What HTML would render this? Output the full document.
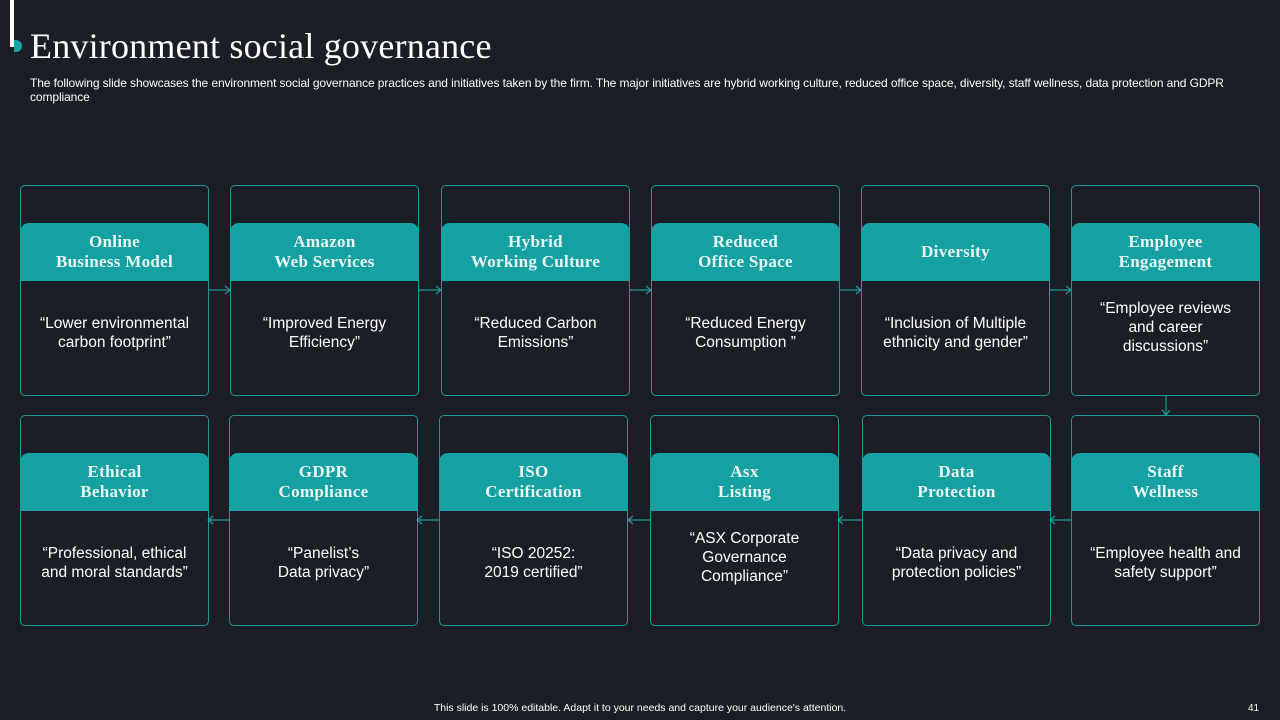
<!DOCTYPE html>
<html><head><meta charset="utf-8"><style>
body{margin:0;width:1280px;height:720px;background:#1b1e25;position:relative;overflow:hidden;font-family:"Liberation Sans",sans-serif;color:#fff}
.bar{position:absolute;left:10px;top:0;width:4px;height:47px;background:#fff}
.dot{position:absolute;left:14px;top:40px;width:8px;height:12px;border-radius:0 6px 6px 0;background:#17a4a6}
h1{position:absolute;left:30px;top:25px;margin:0;font:400 36px "Liberation Serif",serif;color:#fff;letter-spacing:0.2px}
.sub{position:absolute;left:30px;top:76px;width:1225px;font-size:12px;line-height:14px;color:#fff;letter-spacing:-0.1px}
.box{position:absolute;width:189px;height:211px;border:1px solid #1c9a9b;border-radius:5px;box-sizing:border-box}
.hd{position:absolute;left:-1px;right:-1px;top:37px;height:58px;background:#15a1a2;border-radius:9px 9px 0 0;display:flex;align-items:center;justify-content:center;text-align:center;font:700 17px/20px "Liberation Serif",serif;letter-spacing:0.3px;color:#eaf6f6}
.tx{position:absolute;left:0;right:0;top:90px;height:114px;display:flex;align-items:center;justify-content:center;text-align:center;font-size:15.5px;line-height:19px;color:#fff}
.foot{position:absolute;left:0;width:1280px;top:702px;text-align:center;font-size:10.5px}
.pg{position:absolute;left:1248px;top:703px;font-size:10px}
svg.a{position:absolute;overflow:visible}
</style></head><body>
<div class="bar"></div><div class="dot"></div>
<h1>Environment social governance</h1>
<div class="sub">The following slide showcases the environment social governance practices and initiatives taken by the firm. The major initiatives are hybrid working culture, reduced office space, diversity, staff wellness, data protection and GDPR compliance</div>

<div class="box" style="left:20px;top:185px"><div class="hd">Online<br>Business Model</div><div class="tx">“Lower environmental<br>carbon footprint”</div></div>
<div class="box" style="left:230px;top:185px"><div class="hd">Amazon<br>Web Services</div><div class="tx">“Improved Energy<br>Efficiency”</div></div>
<div class="box" style="left:441px;top:185px"><div class="hd">Hybrid<br>Working Culture</div><div class="tx">“Reduced Carbon<br>Emissions”</div></div>
<div class="box" style="left:651px;top:185px"><div class="hd">Reduced<br>Office Space</div><div class="tx">“Reduced Energy<br>Consumption ”</div></div>
<div class="box" style="left:861px;top:185px"><div class="hd">Diversity</div><div class="tx">“Inclusion of Multiple<br>ethnicity and gender”</div></div>
<div class="box" style="left:1071px;top:185px"><div class="hd">Employee<br>Engagement</div><div class="tx" style="top:84px">“Employee reviews<br>and career<br>discussions”</div></div>

<div class="box" style="left:20px;top:415px"><div class="hd">Ethical<br>Behavior</div><div class="tx">“Professional, ethical<br>and moral standards”</div></div>
<div class="box" style="left:229px;top:415px"><div class="hd">GDPR<br>Compliance</div><div class="tx">“Panelist’s<br>Data privacy”</div></div>
<div class="box" style="left:439px;top:415px"><div class="hd">ISO<br>Certification</div><div class="tx">“ISO 20252:<br>2019 certified”</div></div>
<div class="box" style="left:650px;top:415px"><div class="hd">Asx<br>Listing</div><div class="tx" style="top:84px">“ASX Corporate<br>Governance<br>Compliance”</div></div>
<div class="box" style="left:862px;top:415px"><div class="hd">Data<br>Protection</div><div class="tx">“Data privacy and<br>protection policies”</div></div>
<div class="box" style="left:1071px;top:415px"><div class="hd">Staff<br>Wellness</div><div class="tx">“Employee health and<br>safety support”</div></div>

<svg class="a" width="1280" height="720" style="left:0;top:0" fill="none" stroke="#1c9a9b" stroke-width="1.2">
<path d="M209 290h21M225 286l5 4-5 4"/>
<path d="M419 290h22M436 286l5 4-5 4"/>
<path d="M630 290h21M646 286l5 4-5 4"/>
<path d="M840 290h21M856 286l5 4-5 4"/>
<path d="M1050 290h21M1066 286l5 4-5 4"/>
<path d="M1166 396v19M1162 410l4 5 4-5"/>
<path d="M1071 520h-20M1055 516l-5 4 5 4"/>
<path d="M862 520h-23M843 516l-5 4 5 4"/>
<path d="M650 520h-21M633 516l-5 4 5 4"/>
<path d="M439 520h-21M422 516l-5 4 5 4"/>
<path d="M229 520h-20M213 516l-5 4 5 4"/>
</svg>
<div class="foot">This slide is 100% editable. Adapt it to your needs and capture your audience's attention.</div>
<div class="pg">41</div>
</body></html>
